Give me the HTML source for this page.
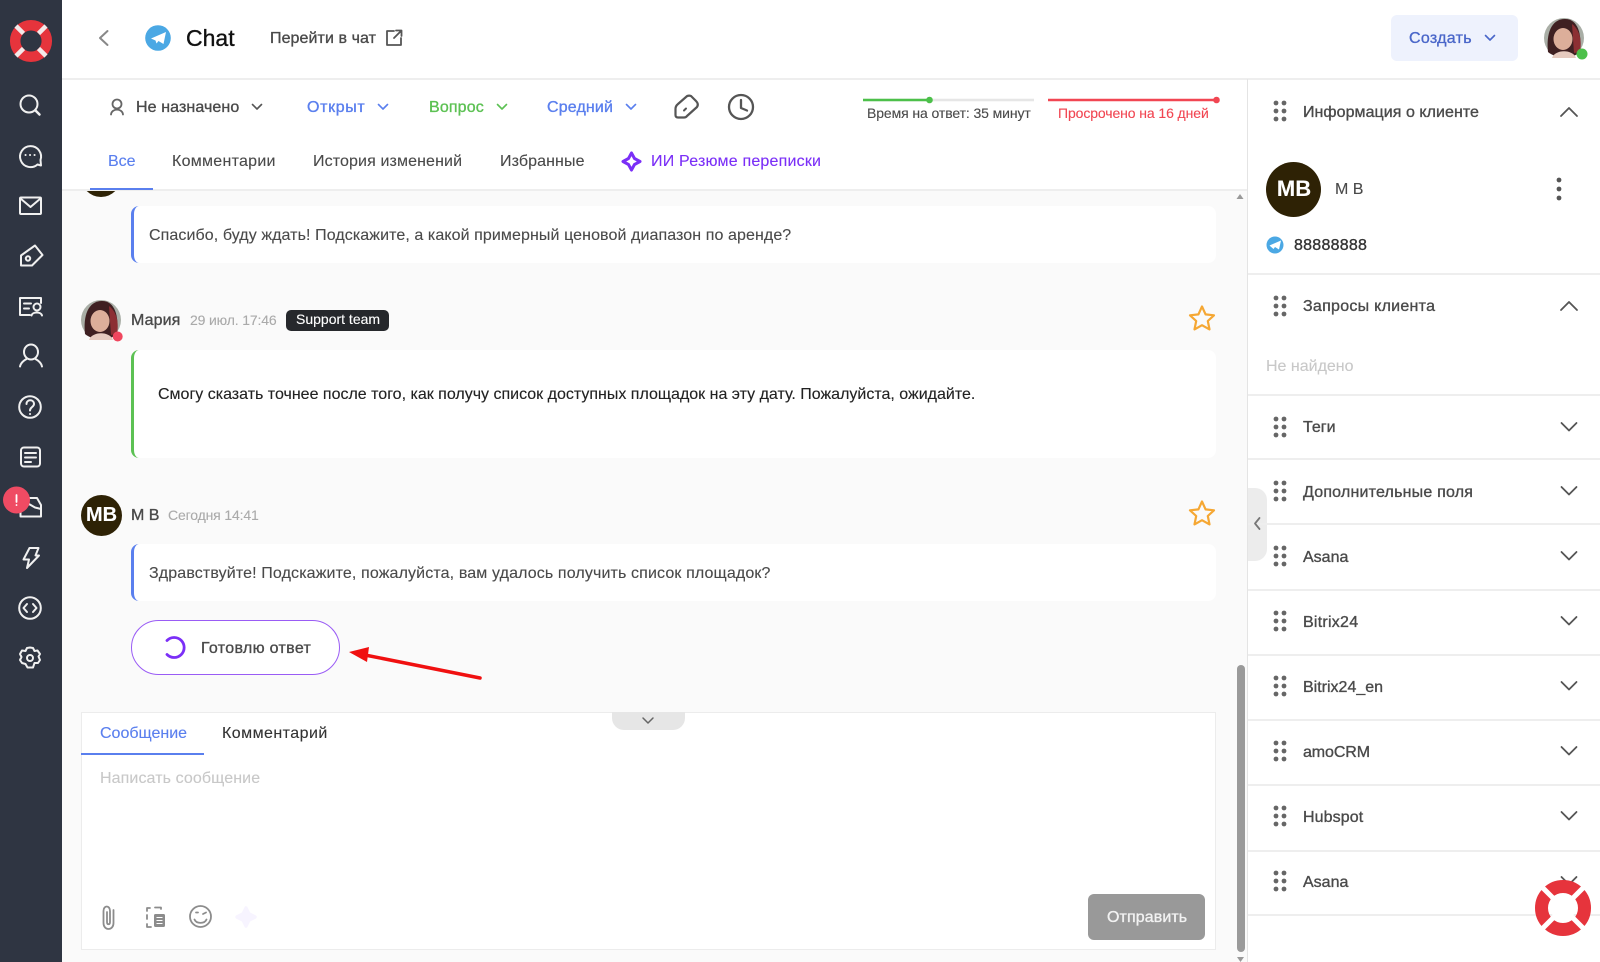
<!DOCTYPE html>
<html lang="ru"><head><meta charset="utf-8"><title>Chat</title>
<style>
*{box-sizing:border-box}
html,body{margin:0;padding:0}
body{width:1600px;height:962px;overflow:hidden;position:relative;background:#fff;font-family:"Liberation Sans",sans-serif;color:#4a4a4a}
.a{position:absolute}
.t{position:absolute;white-space:nowrap;line-height:20px;height:20px;font-size:16px;color:#4a4a4a;-webkit-text-stroke:.12px currentColor}
.t.m{-webkit-text-stroke:.35px currentColor}
.b{position:absolute;background:#fff;border-left:3px solid #5a7fee;border-radius:8px}
.l{position:absolute;left:1248px;width:352px;height:2px;background:#eee}
svg{position:absolute;left:0;top:0}
</style></head><body>
<div class="a" style="left:62px;top:191px;width:1186px;height:771px;background:#fafafa"></div>
<div class="a" style="left:0;top:0;width:62px;height:962px;background:#2f3542"></div>
<div class="a" style="left:62px;top:78px;width:1538px;height:2px;background:#eee"></div>
<div class="a" style="left:62px;top:189px;width:1186px;height:2px;background:#eee"></div>
<div class="a" style="left:1247px;top:79px;width:1px;height:883px;background:#e4e4e4"></div>
<div class="a" style="left:90px;top:188px;width:63px;height:2px;background:#5a7fee"></div>

<div class="a" style="left:85px;top:191px;width:33px;height:6px;overflow:hidden"><div style="width:40px;height:40px;margin:-34px 0 0 -4px;border-radius:50%;background:#2e2205"></div></div>
<div class="b" style="left:131px;top:206px;width:1085px;height:57px"></div>
<div class="b" style="left:131px;top:350px;width:1085px;height:108px;border-left-color:#5cc153"></div>
<div class="b" style="left:131px;top:544px;width:1085px;height:57px"></div>
<div class="a" style="left:131px;top:620px;width:209px;height:55px;border:1.5px solid #9a5cf5;border-radius:28px;background:#fff"></div>
<div class="a" style="left:81px;top:712px;width:1135px;height:238px;background:#fff;border:1px solid #ececec"></div>
<div class="a" style="left:612px;top:712px;width:73px;height:18px;background:#e6e6e6;border-radius:0 0 12px 12px"></div>
<div class="a" style="left:81px;top:753px;width:123px;height:2px;background:#5a7fee"></div>
<div class="a" style="left:1088px;top:894px;width:117px;height:46px;background:#999;border-radius:6px"></div>
<div class="a" style="left:1237px;top:665px;width:8px;height:287px;background:#9a9a9a;border-radius:4px"></div>
<div class="a" style="left:1248px;top:488px;width:19px;height:73px;background:#ececec;border-radius:0 12px 12px 0"></div>
<div class="a" style="left:1391px;top:15px;width:127px;height:46px;background:#eef2fd;border-radius:6px"></div>
<div class="a" style="left:286px;top:310px;width:103px;height:21px;background:#26282c;border-radius:5px"></div>
<div class="a" style="left:81px;top:495px;width:41px;height:41px;border-radius:50%;background:#2e2205"></div>
<div class="a" style="left:1266px;top:162px;width:55px;height:55px;border-radius:50%;background:#2e2205"></div>
<div class="l" style="top:273px"></div><div class="l" style="top:394px"></div><div class="l" style="top:458px"></div><div class="l" style="top:523px"></div><div class="l" style="top:589px"></div><div class="l" style="top:654px"></div><div class="l" style="top:719px"></div><div class="l" style="top:784px"></div><div class="l" style="top:850px"></div><div class="l" style="top:914px"></div>

<svg width="1600" height="962" viewBox="0 0 1600 962" fill="none">
<defs>
<g id="dr" fill="#666"><circle cx="-4" cy="-8" r="2.4"/><circle cx="4" cy="-8" r="2.4"/><circle cx="-4" cy="0" r="2.4"/><circle cx="4" cy="0" r="2.4"/><circle cx="-4" cy="8" r="2.4"/><circle cx="4" cy="8" r="2.4"/></g>
<path id="dn" d="M-7.5 -4L0 3.5L7.5 -4" stroke="#555" stroke-width="1.8" stroke-linecap="round" stroke-linejoin="round"/>
<path id="sm" d="M-4.5 -2.5L0 2L4.5 -2.5" stroke-width="1.6" stroke-linecap="round" stroke-linejoin="round"/>
<path id="st" d="M0 -12.5L3.6 -4.6L12 -3.7L5.8 2L7.5 10.4L0 6.2L-7.5 10.4L-5.8 2L-12 -3.7L-3.6 -4.6Z" stroke="#f5a733" stroke-width="2.2" stroke-linejoin="round"/>
<g id="ph"><circle r="20" fill="#a9aea6"/><path d="M-16 14C-18 -4 -13 -19 1 -19C14 -19 18 -4 16 14C9 21 -8 21 -16 14Z" fill="#3f2022"/><path d="M8 -14C16 -8 18 3 16 14L10 15Z" fill="#8c2f33"/><ellipse cx="-1" cy="1" rx="9.500" ry="11" fill="#dcae9a"/><path d="M-12 20C-9 11 9 11 12 20Z" fill="#e6cabf"/></g>
</defs>

<!-- logo -->
<circle cx="31" cy="41" r="15.8" stroke="#e6343c" stroke-width="10.5"/>
<path d="M16 26L23.500 33.500M46 26L38.500 33.500M16 56L23.500 48.500M46 56L38.500 48.500" stroke="#f4e9e9" stroke-width="4.500"/>
<!-- sidebar icons -->
<g stroke="#f0f0f0" stroke-width="2" stroke-linecap="round" stroke-linejoin="round">
<circle cx="29" cy="104" r="8.500"/><path d="M35.500 110.500L39.500 114.500" stroke-width="2.500"/>
<path d="M41 165.500L37.500 164.500A10.500 10.500 0 1 1 40.500 160Z"/><path d="M25.500 155h.1M30 155h.1M34.500 155h.1"/>
<rect x="20" y="197.500" width="21" height="16.500" rx="1"/><path d="M20.500 198.500L30.500 207L40.500 198.500"/>
<path d="M21 255.500L35 245.500L42.500 255L32 265.500H21Z"/><circle cx="28" cy="258.500" r="2.200"/>
<path d="M41 303V298H20V315H30M24 303.500H31M24 308.500H29"/><circle cx="37" cy="307" r="3.500"/><path d="M31.500 315.500C32.500 311.500 41 311.500 42 315.500"/>
<ellipse cx="31" cy="352" rx="7" ry="7.500"/><path d="M20 366.500C21 361.500 25 360 26.500 359M42 366.500C41 361.500 37 360 35.500 359"/>
<circle cx="30" cy="407" r="10.800"/><path d="M26.500 404C26.500 399 34 399 34 404C34 407 30 407 30 410.500M30 414h.1"/>
<rect x="21" y="447.500" width="19" height="19" rx="3"/><path d="M25 453H36M25 457.500H36M25 462H31"/>
<path d="M20.500 510V516.500H41V505L37 498H28M22 510L29 504L35 507.500L41 509"/>
<path d="M29.500 548H38.500L35.500 555.500H39L27 568L29 559.500H23.500Z"/>
<circle cx="30" cy="608" r="10.800"/><path d="M27 604L23.500 608L27 612M33 604L36.500 608L33 612"/>
<path d="M30 647.500L33 648L34.500 651L37.500 650.500L40 654L38.500 656.500L40 660L38 663L34.500 663L33 667.500H27.500L25.500 664L22 663L20 660L21.500 657L20 654L22 650.500L25.500 651L27 648Z"/><circle cx="30" cy="658" r="3"/>
</g>
<circle cx="16.500" cy="500" r="13.500" fill="#ef4b63"/>
<path d="M16.500 495V502M16.500 505V505.100" stroke="#fff" stroke-width="1.800" stroke-linecap="round"/>

<!-- header -->
<path d="M107.500 31L100 38L107.500 45" stroke="#888" stroke-width="2" stroke-linecap="round" stroke-linejoin="round"/>
<circle cx="158" cy="38" r="12.800" fill="#4ba8e4"/>
<path d="M151 38.500L166 32L163.500 44L158.500 41L156.500 43.500L155.500 40.500Z" fill="#fff"/>
<path d="M394 31H387V45H401V38M394 38L401 31M396 30.500H401.500V36" stroke="#555" stroke-width="1.800" stroke-linecap="round" stroke-linejoin="round"/>
<use href="#sm" x="1490" y="38" stroke="#4a67c9"/>
<use href="#ph" x="1564" y="38"/>
<circle cx="1582" cy="54" r="5.500" fill="#4cc04a"/>

<!-- toolbar -->
<circle cx="117" cy="104" r="4.500" stroke="#666" stroke-width="1.800"/><path d="M111 114.500C111.500 108 122.500 108 123 114.500" stroke="#666" stroke-width="1.800" stroke-linecap="round"/>
<use href="#sm" x="257" y="107" stroke="#555"/>
<use href="#sm" x="383" y="107" stroke="#5a7fee"/>
<use href="#sm" x="502" y="107" stroke="#5cc153"/>
<use href="#sm" x="631" y="107" stroke="#5a7fee"/>
<path d="M678 104L686 97Q688 95 691 96L696 101Q699 104 697 107L687 116Q686 117.500 684 117.500L678 117.500Q675.500 117.500 675.500 115L675.500 109Q675.500 106 678 104Z" stroke="#555" stroke-width="2.200" stroke-linejoin="round"/><path d="M684 110.500L686 108.500" stroke="#555" stroke-width="2" stroke-linecap="round"/>
<circle cx="741" cy="107" r="12" stroke="#555" stroke-width="2.300"/><path d="M741 100V108L747 110.500" stroke="#555" stroke-width="2.300" stroke-linecap="round" stroke-linejoin="round"/>
<path d="M863 100H1034" stroke="#e6e6e6" stroke-width="2.500"/><path d="M863 100H929" stroke="#4cc04a" stroke-width="2.500"/><circle cx="929.500" cy="100" r="3.300" fill="#4cc04a"/>
<path d="M1048 100H1216" stroke="#f14652" stroke-width="2.500"/><circle cx="1216.500" cy="100" r="3.300" fill="#f14652"/>
<path d="M631.500 153L634.500 158.500L640 161.500L634.500 164.500L631.500 170L628.500 164.500L623 161.500L628.500 158.500Z" stroke="#7b2ff7" stroke-width="3" stroke-linejoin="round"/>

<!-- chat -->
<path d="M1240 194L1243.500 199H1236.500Z" fill="#999"/><path d="M1237 957H1244L1240.500 962Z" fill="#999"/>
<use href="#ph" x="101" y="320"/>
<circle cx="117.700" cy="336.500" r="5" fill="#f0465e"/>
<use href="#st" x="1202" y="319"/><use href="#st" x="1202" y="514"/>
<path d="M167 640.500A10 10 0 1 1 167 654.500" stroke="#7b2ff7" stroke-width="2.800" stroke-linecap="round"/>
<path d="M480 678L365 655" stroke="#f01010" stroke-width="3.500" stroke-linecap="round"/>
<path d="M349 652L369 647L367 662Z" fill="#f01010"/>
<path d="M643 718L648 723L653 718" stroke="#666" stroke-width="1.500" stroke-linecap="round" stroke-linejoin="round"/>
<path d="M1259.500 518L1255 523.500L1259.500 529" stroke="#777" stroke-width="1.800" stroke-linecap="round" stroke-linejoin="round"/>

<!-- composer icons -->
<path d="M113.500 910V923C113.500 931 103.500 931 103.500 923V911C103.500 905 110 905 110 911V922C110 925 107 925 107 922V912" stroke="#8c8c8c" stroke-width="1.800" stroke-linecap="round"/>
<path d="M147 911V908H150M155 907.500H161V909M147 915V919M147 924V927H151" stroke="#8c8c8c" stroke-width="1.800" stroke-linecap="round" stroke-linejoin="round"/><rect x="154" y="914" width="11" height="13" rx="1.500" fill="#8c8c8c"/><path d="M156.500 917.500H162.500M156.500 920.500H162.500M156.500 923.500H162.500" stroke="#fff" stroke-width="1"/>
<circle cx="200.500" cy="916.500" r="10.500" stroke="#8c8c8c" stroke-width="1.800"/><path d="M194.500 919.500C196.500 924 204.500 924 206.500 919.500M196 912.500h2M203 914L206 912.500" stroke="#8c8c8c" stroke-width="1.800" stroke-linecap="round"/>
<path d="M246 908L249 914L255 917L249 920L246 926L243 920L237 917L243 914Z" fill="#f7f4ff" stroke="#f7f4ff" stroke-width="3.500" stroke-linejoin="round"/>

<!-- right panel -->
<use href="#dr" x="1280" y="111"/><use href="#dr" x="1280" y="306"/><use href="#dr" x="1280" y="427"/><use href="#dr" x="1280" y="491"/><use href="#dr" x="1280" y="556"/><use href="#dr" x="1280" y="621"/><use href="#dr" x="1280" y="686"/><use href="#dr" x="1280" y="751"/><use href="#dr" x="1280" y="816"/><use href="#dr" x="1280" y="881"/>
<path d="M1561 116L1569 108L1577 116" stroke="#555" stroke-width="1.800" stroke-linecap="round" stroke-linejoin="round"/>
<path d="M1561 310L1569 302L1577 310" stroke="#555" stroke-width="1.800" stroke-linecap="round" stroke-linejoin="round"/>
<use href="#dn" x="1569" y="427"/><use href="#dn" x="1569" y="491"/><use href="#dn" x="1569" y="556"/><use href="#dn" x="1569" y="621"/><use href="#dn" x="1569" y="686"/><use href="#dn" x="1569" y="751"/><use href="#dn" x="1569" y="816"/><use href="#dn" x="1569" y="881"/>
<g fill="#555"><circle cx="1559" cy="180" r="2.400"/><circle cx="1559" cy="189" r="2.400"/><circle cx="1559" cy="198" r="2.400"/></g>
<circle cx="1275" cy="245" r="8.500" fill="#4ba8e4"/><path d="M1269.500 245.500L1281 240.500L1279 249.500L1275 247L1273.500 249Z" fill="#fff"/>

<!-- float lifebuoy -->
<circle cx="1563" cy="908" r="21.500" stroke="#e6343c" stroke-width="13"/>
<path d="M1540 885L1554 899M1586 885L1572 899M1540 931L1554 917M1586 931L1572 917" stroke="#fff" stroke-width="5"/>
<rect x="1552" y="897" width="22" height="22" rx="6" fill="#fff"/>
</svg>

<div class="t m" style="left:186px;top:26px;height:24px;line-height:24px;font-size:23px;color:#111">Chat</div>
<div class="t m" style="left:270px;top:29px;letter-spacing:.08px">Перейти в чат</div>
<div class="t m" style="left:1409px;top:29px;color:#4a67c9;letter-spacing:.3px">Создать</div>
<div class="t m" style="left:136px;top:98px;letter-spacing:.1px">Не назначено</div>
<div class="t m" style="left:307px;top:98px;color:#5a7fee;letter-spacing:.65px">Открыт</div>
<div class="t m" style="left:429px;top:98px;color:#5cc153;letter-spacing:.15px">Вопрос</div>
<div class="t m" style="left:547px;top:98px;color:#5a7fee;letter-spacing:.15px">Средний</div>
<div class="t" style="left:867px;top:103px;font-size:14px;letter-spacing:-.1px">Время на ответ: 35 минут</div>
<div class="t" style="left:1058px;top:103px;font-size:14px;color:#f14652;letter-spacing:-.1px">Просрочено на 16 дней</div>
<div class="t" style="left:108px;top:152px;color:#5a7fee">Все</div>
<div class="t" style="left:172px;top:152px;letter-spacing:.27px">Комментарии</div>
<div class="t" style="left:313px;top:152px;letter-spacing:.12px">История изменений</div>
<div class="t" style="left:500px;top:152px;letter-spacing:.1px">Избранные</div>
<div class="t" style="left:651px;top:152px;color:#7b2ff7;letter-spacing:.2px">ИИ Резюме переписки</div>

<div class="t" style="left:149px;top:226px;letter-spacing:.09px">Спасибо, буду ждать! Подскажите, а какой примерный ценовой диапазон по аренде?</div>
<div class="t m" style="left:131px;top:311px;letter-spacing:.1px">Мария</div>
<div class="t" style="left:190px;top:310px;font-size:14px;color:#aaa;letter-spacing:-.15px">29 июл. 17:46</div>
<div class="t" style="left:296px;top:309px;font-size:14px;color:#fff">Support team</div>
<div class="t" style="left:158px;top:385px;color:#222">Смогу сказать точнее после того, как получу список доступных площадок на эту дату. Пожалуйста, ожидайте.</div>
<div class="t" style="left:86px;top:505px;width:30px;text-align:center;font-size:20px;font-weight:700;color:#fff">МВ</div>
<div class="t m" style="left:131px;top:506px">М В</div>
<div class="t" style="left:168px;top:505px;font-size:14px;color:#aaa;letter-spacing:-.15px">Сегодня 14:41</div>
<div class="t" style="left:149px;top:564px;letter-spacing:.13px">Здравствуйте! Подскажите, пожалуйста, вам удалось получить список площадок?</div>
<div class="t m" style="left:201px;top:639px;letter-spacing:.32px">Готовлю ответ</div>
<div class="t" style="left:100px;top:724px;color:#5a7fee">Сообщение</div>
<div class="t" style="left:222px;top:724px;color:#333;letter-spacing:.45px">Комментарий</div>
<div class="t" style="left:100px;top:769px;color:#c8c8c8;letter-spacing:.1px">Написать сообщение</div>
<div class="t m" style="left:1107px;top:908px;color:#f2f2f2;letter-spacing:.1px">Отправить</div>

<div class="t m" style="left:1303px;top:103px;letter-spacing:.05px">Информация о клиенте</div>
<div class="t" style="left:1270px;top:179px;width:48px;text-align:center;font-size:22px;font-weight:700;color:#fff">МВ</div>
<div class="t" style="left:1335px;top:180px">М В</div>
<div class="t m" style="left:1294px;top:236px;color:#333;letter-spacing:.25px">88888888</div>
<div class="t m" style="left:1303px;top:297px;letter-spacing:.27px">Запросы клиента</div>
<div class="t" style="left:1266px;top:357px;color:#c8c8c8">Не найдено</div>
<div class="t m" style="left:1303px;top:418px">Теги</div>
<div class="t m" style="left:1303px;top:483px;letter-spacing:.2px">Дополнительные поля</div>
<div class="t m" style="left:1303px;top:548px">Asana</div>
<div class="t m" style="left:1303px;top:613px;letter-spacing:.25px">Bitrix24</div>
<div class="t m" style="left:1303px;top:678px">Bitrix24_en</div>
<div class="t m" style="left:1303px;top:743px;letter-spacing:-.1px">amoCRM</div>
<div class="t m" style="left:1303px;top:808px;letter-spacing:.1px">Hubspot</div>
<div class="t m" style="left:1303px;top:873px">Asana</div>
</body></html>
